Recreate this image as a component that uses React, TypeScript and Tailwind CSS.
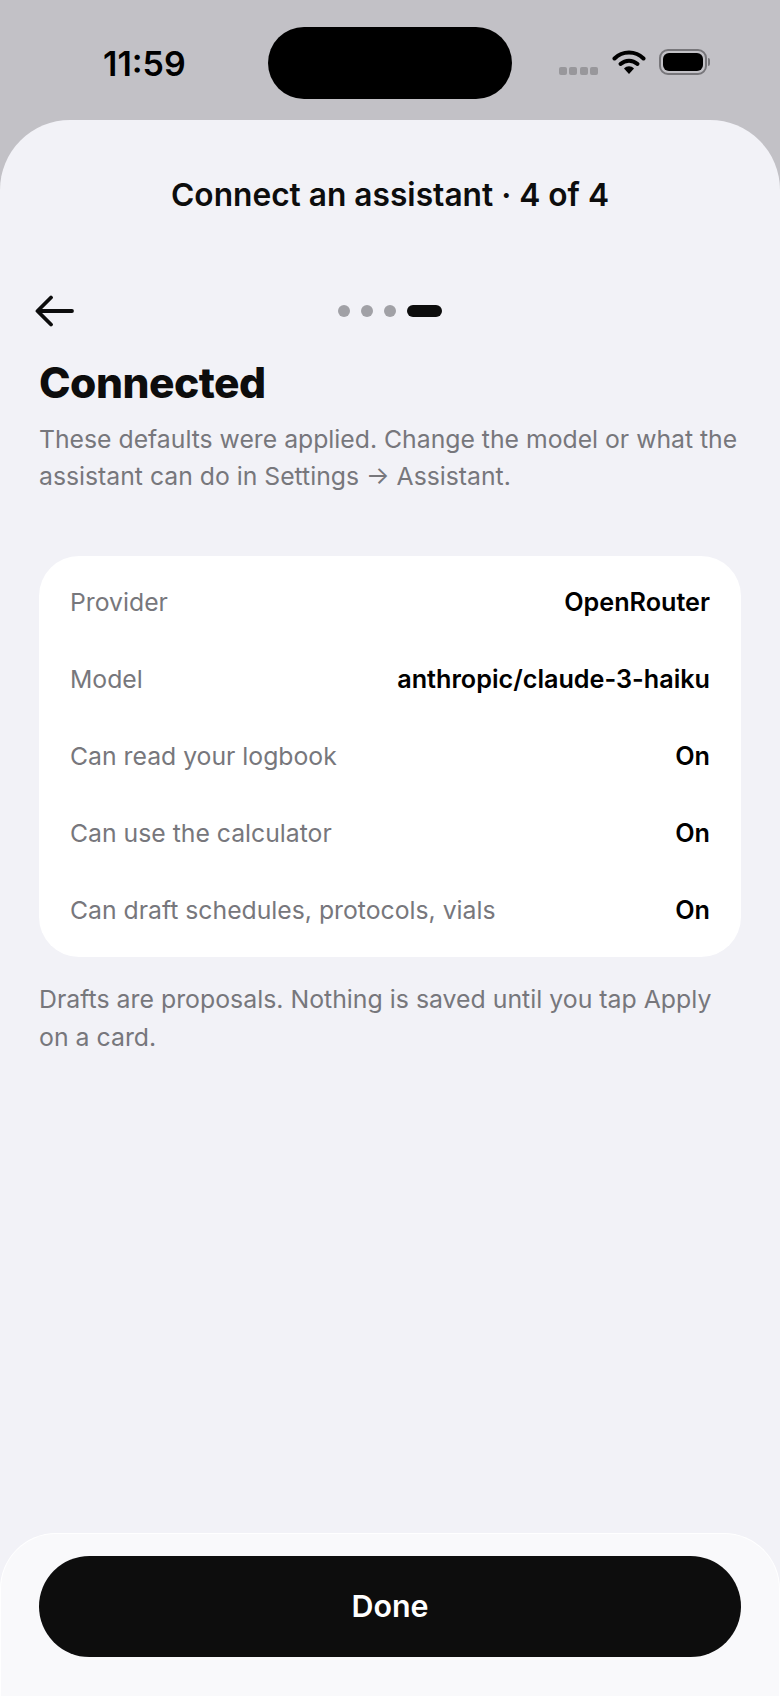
const rows = [
  ["Provider", "OpenRouter"],
  ["Model", "anthropic/claude-3-haiku"],
  ["Can read your logbook", "On"],
  ["Can use the calculator", "On"],
  ["Can draft schedules, protocols, vials", "On"],
];

export default function App() {
  return (
    <div className="flex h-[1696px] w-[780px] flex-col overflow-hidden bg-[#c2c1c6] font-['Inter',sans-serif] text-[#0d0d0d]">
      <div className="relative flex h-[120px] shrink-0 items-start justify-between pl-[103px] pr-[70px]">
        <span className="mt-[43px] text-[34px] font-semibold leading-[42px] text-black">11:59</span>
        <div className="absolute left-[268px] top-[27px] h-[72px] w-[244px] rounded-[36px] bg-black" />
        <div className="mt-[49px] flex items-center">
          <div className="mr-[14px] mt-[18px] flex gap-[2.5px]">
            <i className="h-[8px] w-[8px] rounded-[2px] bg-[#98979b]" />
            <i className="h-[8px] w-[8px] rounded-[2px] bg-[#98979b]" />
            <i className="h-[8px] w-[8px] rounded-[2px] bg-[#98979b]" />
            <i className="h-[8px] w-[8px] rounded-[2px] bg-[#98979b]" />
          </div>
          <svg width="34" height="26" viewBox="0 0 34 26" className="mr-[13px]">
            <path d="M2.5 9.5C10.5 1.5 23.5 1.5 31.5 9.5" fill="none" stroke="#000" strokeWidth="4" strokeLinecap="round" />
            <path d="M8.5 15C13.5 10.5 20.5 10.5 25.5 15" fill="none" stroke="#000" strokeWidth="4" strokeLinecap="round" />
            <path d="M12 19.5C15 16.5 19 16.5 22 19.5L17 25Z" fill="#000" />
          </svg>
          <div className="flex items-center">
            <div className="flex h-[26px] w-[48px] items-center justify-center rounded-[9px] border-2 border-[#77767a]">
              <div className="h-[18px] w-[40px] rounded-[6px] bg-black" />
            </div>
            <div className="ml-[1px] h-[8px] w-[2px] rounded-r-[2px] bg-[#77767a]" />
          </div>
        </div>
      </div>

      <div className="flex min-h-0 flex-1 flex-col rounded-t-[70px] bg-[#f2f2f7]">
        <div className="pt-[55px] text-center text-[31.7px] font-semibold leading-[40px]">Connect an assistant · 4 of 4</div>

        <div className="relative mt-[86px] flex h-[20px] items-center justify-center gap-[11px]">
          <svg width="40" height="32" viewBox="0 0 40 32" fill="none" className="absolute left-[35px] top-[-6px]">
            <path d="M37 16H3M16 2.5 2.5 16 16 29.5" stroke="#0d0d0d" strokeWidth="3.8" strokeLinecap="round" strokeLinejoin="round" />
          </svg>
          <i className="h-[12px] w-[12px] rounded-full bg-[#a1a1a6]" />
          <i className="h-[12px] w-[12px] rounded-full bg-[#a1a1a6]" />
          <i className="h-[12px] w-[12px] rounded-full bg-[#a1a1a6]" />
          <i className="h-[12px] w-[35px] rounded-full bg-[#0d0d0d]" />
        </div>

        <div className="flex flex-1 flex-col px-[39px]">
          <h1 className="mt-[37px] text-[42.5px] font-extrabold leading-[50px] tracking-[-0.5px]">Connected</h1>
          <p className="mt-[13px] text-[24.75px] leading-[37px] text-[#77777c]">
            These defaults were applied. Change the model or what the assistant can do in Settings → Assistant.
          </p>

          <div className="mt-[61px] rounded-[40px] bg-white px-[31px] py-[8px]">
            {rows.map(([k, v]) => (
              <div key={k} className="flex h-[77px] items-center justify-between text-[24.75px]">
                <span className="text-[#77777c]">{k}</span>
                <span className="text-[25.2px] font-semibold text-black">{v}</span>
              </div>
            ))}
          </div>

          <p className="mt-[24px] text-[24.85px] leading-[37.5px] text-[#77777c]">
            Drafts are proposals. Nothing is saved until you tap Apply on a card.
          </p>
        </div>

        <div className="flex h-[163px] shrink-0 flex-col rounded-t-[56px] border-x border-t border-white bg-[#f9f9fb] px-[38px] pt-[22px]">
          <button className="h-[101px] w-full rounded-full bg-[#0d0d0d] text-[30.4px] font-semibold text-white">Done</button>
        </div>
      </div>
    </div>
  );
}
